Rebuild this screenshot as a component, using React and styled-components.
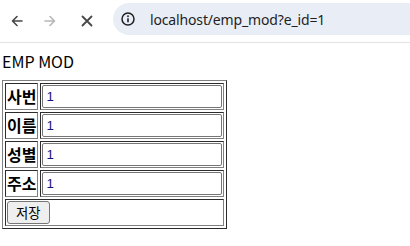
import React from "react";
import styled, { createGlobalStyle } from "styled-components";

const GlobalStyle = createGlobalStyle`
  html, body {
    margin: 0;
    padding: 0;
    background: #fff;
  }
  body {
    width: 410px;
    height: 246px;
    overflow: hidden;
    font-family: "Noto Sans CJK KR", "Noto Sans", sans-serif;
  }
`;

const Toolbar = styled.div`
  display: flex;
  align-items: center;
  height: 42px;
  background: #fff;
  border-bottom: 1px solid #e3e3e3;
`;

const NavBtn = styled.div`
  display: flex;
  align-items: center;
  justify-content: center;
  width: 33px;
  height: 34px;
  margin-left: ${(p) => p.$ml || 0}px;
  color: ${(p) => (p.$disabled ? "#b7b7b7" : "#474747")};
`;

const Omnibox = styled.div`
  display: flex;
  align-items: center;
  flex: 1;
  height: 32px;
  margin-left: 10px;
  margin-top: -4px;
  padding-left: 8px;
  background: #e9eef6;
  border-radius: 16px 0 0 16px;
  color: #1f1f1f;
`;

const InfoIcon = styled.div`
  display: flex;
  width: 14px;
  height: 14px;
  margin-right: 15px;
  color: #1f1f1f;
`;

const Url = styled.span`
  font-family: "Noto Sans", sans-serif;
  font-size: 14px;
  letter-spacing: -0.15px;
`;

const Content = styled.div`
  padding-left: 2px;
`;

const Title = styled.div`
  margin-top: 8px;
  line-height: 21px;
  font-size: 16px;
  color: #000;
`;

const Table = styled.table`
  margin-top: 8px;
  border: 1px outset #808080;
  border-spacing: 2px;
`;

const Th = styled.th`
  border: 1px inset #808080;
  padding: 1px;
  font-size: 16px;
  font-weight: bold;
  line-height: 23px;
  color: #000;
`;

const Td = styled.td`
  border: 1px inset #808080;
  padding: 1px;
  line-height: 0;
`;

const Input = styled.input`
  box-sizing: border-box;
  width: 180px;
  height: 23px;
  margin: 0;
  padding: 1px 3px;
  border: 1px solid #767676;
  border-radius: 2px;
  font-family: "Liberation Sans", Arial, sans-serif;
  font-size: 13.33px;
  color: #141478;
  background: #fff;
  outline: none;
`;

const SaveBtn = styled.button`
  box-sizing: border-box;
  height: 23px;
  margin: 0;
  padding: 0 8px;
  border: 1px solid #767676;
  border-radius: 3px;
  background: #efefef;
  font-family: "Noto Sans CJK KR", sans-serif;
  font-size: 13.33px;
  color: #000;
`;

const Arrow = ({ flip }) => (
  <svg width="16" height="16" viewBox="0 0 16 16" fill="none" stroke="currentColor" strokeWidth="1.6" strokeLinecap="round" strokeLinejoin="round" style={flip ? { transform: "scaleX(-1)" } : undefined}>
    <path d="M13 8H3.5M8 3.5L3.5 8L8 12.5" />
  </svg>
);

const Close = () => (
  <svg width="16" height="16" viewBox="0 0 16 16" fill="none" stroke="currentColor" strokeWidth="1.8" strokeLinecap="round">
    <path d="M3.5 3.5L12.5 12.5M12.5 3.5L3.5 12.5" />
  </svg>
);

const Info = () => (
  <svg width="14" height="14" viewBox="0 0 14 14" fill="none" stroke="currentColor">
    <circle cx="7" cy="7" r="6" strokeWidth="1.5" />
    <path d="M7 6.2V10.2" strokeWidth="1.6" />
    <circle cx="7" cy="4.2" r="0.6" fill="currentColor" strokeWidth="0.8" />
  </svg>
);

const fields = ["사번", "이름", "성별", "주소"];

const App = () => {
  return (
    <>
      <GlobalStyle />
      <Toolbar>
        <NavBtn>
          <Arrow />
        </NavBtn>
        <NavBtn $disabled>
          <Arrow flip />
        </NavBtn>
        <NavBtn $ml={4}>
          <Close />
        </NavBtn>
        <Omnibox>
          <InfoIcon>
            <Info />
          </InfoIcon>
          <Url>localhost/emp_mod?e_id=1</Url>
        </Omnibox>
      </Toolbar>
      <Content>
        <Title>EMP MOD</Title>
        <Table>
          <tbody>
            {fields.map((f) => (
              <tr key={f}>
                <Th>{f}</Th>
                <Td>
                  <Input defaultValue="1" />
                </Td>
              </tr>
            ))}
            <tr>
              <Td colSpan={2}>
                <SaveBtn>저장</SaveBtn>
              </Td>
            </tr>
          </tbody>
        </Table>
      </Content>
    </>
  );
};

export default App;
